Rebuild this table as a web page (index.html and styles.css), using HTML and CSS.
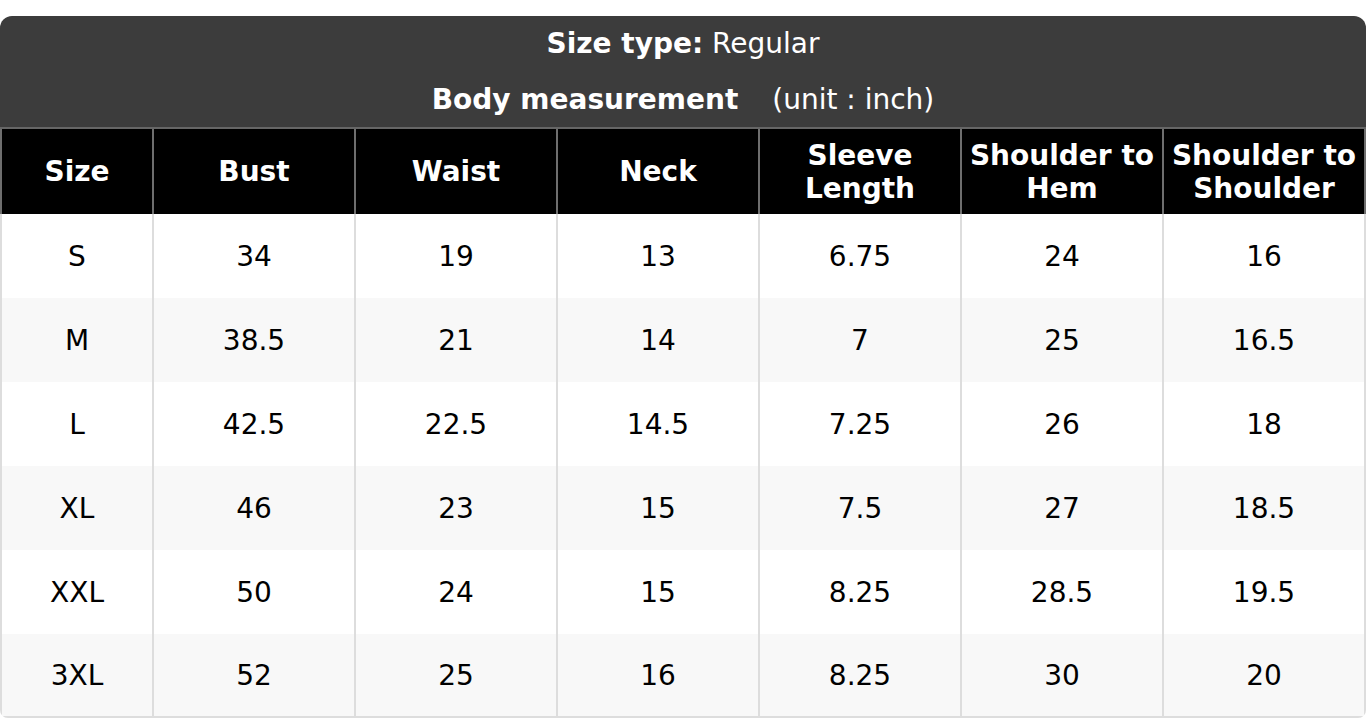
FILE: index.html
```html
<!DOCTYPE html>
<html lang="en">
<head>
<meta charset="utf-8">
<title>Size chart</title>
<link rel="stylesheet" href="styles.css">
</head>
<body>
<div class="page">
  <div class="chart">
    <div class="title">
      <div class="title-line"><strong>Size type:</strong> Regular</div>
      <div class="title-line"><strong>Body measurement</strong><span class="unit">(unit : inch)</span></div>
    </div>
    <table class="sizes">
      <colgroup>
        <col class="col-size">
        <col class="col-m"><col class="col-m"><col class="col-m"><col class="col-m"><col class="col-m">
        <col>
      </colgroup>
      <thead>
        <tr>
          <th>Size</th>
          <th>Bust</th>
          <th>Waist</th>
          <th>Neck</th>
          <th>Sleeve<br>Length</th>
          <th>Shoulder to<br>Hem</th>
          <th>Shoulder to<br>Shoulder</th>
        </tr>
      </thead>
      <tbody>
        <tr><td>S</td><td>34</td><td>19</td><td>13</td><td>6.75</td><td>24</td><td>16</td></tr>
        <tr><td>M</td><td>38.5</td><td>21</td><td>14</td><td>7</td><td>25</td><td>16.5</td></tr>
        <tr><td>L</td><td>42.5</td><td>22.5</td><td>14.5</td><td>7.25</td><td>26</td><td>18</td></tr>
        <tr><td>XL</td><td>46</td><td>23</td><td>15</td><td>7.5</td><td>27</td><td>18.5</td></tr>
        <tr><td>XXL</td><td>50</td><td>24</td><td>15</td><td>8.25</td><td>28.5</td><td>19.5</td></tr>
        <tr><td>3XL</td><td>52</td><td>25</td><td>16</td><td>8.25</td><td>30</td><td>20</td></tr>
      </tbody>
    </table>
  </div>
</div>
</body>
</html>
```

FILE: styles.css
```css
* {
  box-sizing: border-box;
}

html, body {
  margin: 0;
  padding: 0;
  background: #ffffff;
}

body {
  font-family: "DejaVu Sans", Verdana, sans-serif;
  font-size: 28px;
  color: #000000;
}

.page {
  padding-top: 16px;
}

.chart {
  width: 1366px;
  border-radius: 12px 12px 8px 8px;
  overflow: hidden;
}

.title {
  background: #3c3c3c;
  color: #ffffff;
  text-align: center;
  border-bottom: 2px solid #666666;
}

.title-line {
  height: 56px;
  line-height: 56px;
}

.title-line:last-child {
  height: 55px;
}

.title strong {
  font-weight: bold;
}

.unit {
  margin-left: 34px;
}

.sizes {
  width: 100%;
  table-layout: fixed;
  border-collapse: separate;
  border-spacing: 0;
}

.col-size {
  width: 152px;
}

.col-m {
  width: 202px;
}

.sizes th {
  background: #000000;
  color: #ffffff;
  font-weight: bold;
  height: 85px;
  padding: 0;
  line-height: 33px;
  text-align: center;
  vertical-align: middle;
  border-left: 2px solid #6e6e6e;
}

.sizes th:last-child {
  border-right: 2px solid #6e6e6e;
}

.sizes td {
  height: 84px;
  padding: 0;
  text-align: center;
  vertical-align: middle;
  border-left: 2px solid #dddddd;
}

.sizes td:last-child {
  border-right: 2px solid #dddddd;
}

.sizes tbody tr:nth-child(even) td {
  background: #f8f8f8;
}

.sizes tbody tr:last-child td {
  border-bottom: 2px solid #dddddd;
}
```
